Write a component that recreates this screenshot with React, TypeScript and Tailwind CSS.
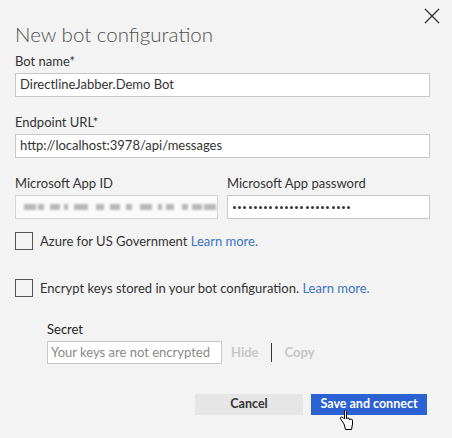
import React from "react";

const font = { fontFamily: 'Lato, "Noto Sans", sans-serif' };

const Checkbox = ({ label }: { label: string }) => (
  <div className="flex items-center gap-[7px] h-[20px]">
    <div className="w-[18px] h-[18px] border border-[#555] bg-[#f3f3f3]" />
    <span className="text-[13px] leading-[20px] text-[#333]">
      {label} <a className="text-[#3c73c2]">Learn more.</a>
    </span>
  </div>
);

const TextInput = ({ value, className = "" }: { value: string; className?: string }) => (
  <div
    className={`h-[24px] border border-[#c8c8c8] bg-white flex items-center px-[4px] text-[13px] text-[#333] whitespace-nowrap ${className}`}
  >
    {value}
  </div>
);

const BlurredId = () => {
  const blocks = [
    [8, 12], [22, 6], [34, 10], [48, 4], [58, 14], [80, 8], [94, 10], [110, 6],
    [124, 12], [142, 4], [150, 8], [166, 6], [176, 10], [188, 12],
  ];
  return (
    <div className="relative h-[24px] flex-1 border border-[#d4d4d4] bg-[#fafafa] overflow-hidden">
      <div className="absolute inset-0 blur-[1.2px]">
        {blocks.map(([l, w], i) => (
          <div
            key={i}
            className="absolute top-[8px] h-[6px] bg-[#8a8a8a] opacity-60"
            style={{ left: l, width: w }}
          />
        ))}
      </div>
    </div>
  );
};

const PasswordDots = () => (
  <div className="h-[24px] border border-[#c8c8c8] bg-white flex items-center pl-[5px] gap-[2.2px]">
    {Array.from({ length: 23 }).map((_, i) => (
      <span key={i} className="w-[3px] h-[3px] rounded-full bg-[#3a3a3a]" />
    ))}
  </div>
);

const HandCursor = () => (
  <svg width="14" height="20" viewBox="0 0 14 20" className="absolute left-[339px] top-[410px]">
    <path
      d="M5.5 0.5 L5.5 9 L4 7.5 Q2.5 6.5 1.5 7.5 Q1 8.5 2 9.5 L5 14 L6.5 19.5 L12.5 19.5 L13.5 14 L13.5 10.5 Q13.5 9 12 9 Q11 9 10.5 10 L10.5 9 Q10 8 9 8 Q8 8 7.5 9 L7.5 1.5 Q7 0 6.5 0 Q5.5 0 5.5 0.5 Z"
      fill="white"
      stroke="black"
      strokeWidth="1"
    />
  </svg>
);

export default function App() {
  return (
    <div className="relative w-[452px] h-[438px] bg-[#f3f3f3] overflow-hidden" style={font}>
      {/* close */}
      <svg width="16" height="16" viewBox="0 0 16 16" className="absolute left-[424px] top-[8px]">
        <path d="M1 1 L15 15 M15 1 L1 15" stroke="#333" strokeWidth="1.3" />
      </svg>

      <div className="flex flex-col pl-[15px] pr-[22px] pt-[19px]">
        <h1 className="text-[20.5px] font-light leading-[30px] text-[#505050]">New bot configuration</h1>

        <label className="mt-[3px] text-[13px] leading-[18px] text-[#333]">Bot name*</label>
        <TextInput value="DirectlineJabber.Demo Bot" className="mt-[3px]" />

        <label className="mt-[16px] text-[13px] leading-[18px] text-[#333]">Endpoint URL*</label>
        <TextInput value="http://localhost:3978/api/messages" className="mt-[3px]" />

        <div className="mt-[16px] flex gap-[9px]">
          <div className="flex-1 flex flex-col">
            <label className="text-[13px] leading-[18px] text-[#333]">Microsoft App ID</label>
            <div className="mt-[3px] flex">
              <BlurredId />
            </div>
          </div>
          <div className="flex-1 flex flex-col">
            <label className="text-[13px] leading-[18px] text-[#333]">Microsoft App password</label>
            <div className="mt-[3px]">
              <PasswordDots />
            </div>
          </div>
        </div>

        <div className="mt-[12px]">
          <Checkbox label="Azure for US Government" />
        </div>
        <div className="mt-[27px]">
          <Checkbox label="Encrypt keys stored in your bot configuration." />
        </div>

        <div className="ml-[32px] mt-[22px] flex flex-col">
          <label className="text-[13px] leading-[18px] text-[#222]">Secret</label>
          <div className="mt-[3px] flex items-center">
            <div className="w-[175px] h-[23px] border border-[#c8c8c8] bg-white flex items-center px-[3px] text-[13px] text-[#888] whitespace-nowrap overflow-hidden">
              Your keys are not encrypted
            </div>
            <span className="ml-[9px] text-[13px] font-bold text-[#c6c6c6]">Hide</span>
            <div className="ml-[12px] w-px h-[19px] bg-[#333]" />
            <span className="ml-[13px] text-[13px] font-bold text-[#c6c6c6]">Copy</span>
          </div>
        </div>

        <div className="mt-[30px] flex justify-end gap-[8px] pr-[3px]">
          <button className="w-[108px] h-[21px] bg-[#e6e6e6] text-[12.5px] font-bold text-[#333] leading-none">
            Cancel
          </button>
          <button className="w-[116px] h-[21px] bg-[#2b62d3] text-[12.5px] font-bold text-white leading-none">
            Save and connect
          </button>
        </div>
      </div>
      <HandCursor />
    </div>
  );
}
